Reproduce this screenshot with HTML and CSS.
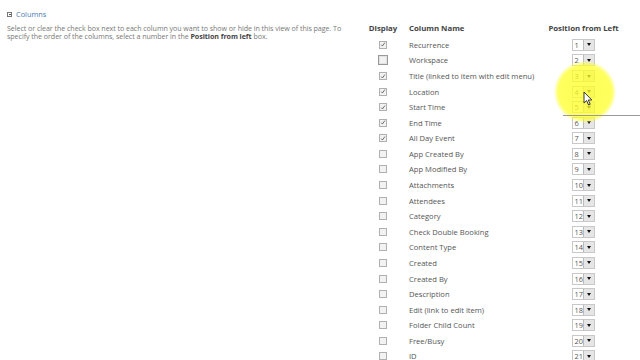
FILE: index.html
```html
<!DOCTYPE html>
<html>
<head>
<meta charset="utf-8">
<link rel="stylesheet" href="styles.css">
</head>
<body>
<div class="page">
  <section class="intro">
    <div class="title"><span class="collapse"></span>Columns</div>
    <p class="desc">Select or clear the check box next to each column you want to show or hide in this view of this page. To specify the order of the columns, select a number in the <b>Position from left</b> box.</p>
  </section>
  <section class="cols">
    <div class="grid" id="grid">
      <div class="h h-display">Display</div>
      <div class="h h-name">Column Name</div>
      <div class="h h-pos">Position from Left</div>
    </div>
  </section>
</div>
<div class="highlight"></div>
<div class="rule"></div>
<svg class="cursor" width="10" height="15" viewBox="0 0 10 15"><path d="M1 1 L1 12 L3.6 9.6 L5.6 14 L7.2 13.3 L5.3 9 L8.8 9 Z" fill="#fff" stroke="#222" stroke-width="0.9" stroke-linejoin="round"/></svg>
<script src="app.js"></script>
</body>
</html>
```
FILE: app.js
```js
var rows = [
  ["Recurrence", 1],["Workspace", 0],["Title (linked to item with edit menu)", 1],["Location", 1],["Start Time", 1],["End Time", 1],["All Day Event", 1],["App Created By", 0],["App Modified By", 0],["Attachments", 0],["Attendees", 0],["Category", 0],["Check Double Booking", 0],["Content Type", 0],["Created", 0],["Created By", 0],["Description", 0],["Edit (link to edit item)", 0],["Folder Child Count", 0],["Free/Busy", 0],["ID", 0]
];
var g = document.getElementById('grid');
rows.forEach(function (r, i) {
  var c = document.createElement('div'); c.className = 'cell c-box';
  var b = document.createElement('span'); b.className = 'cb' + (i === 1 ? ' focus' : '');
  if (r[1]) b.innerHTML = '<svg viewBox="0 0 8 8" width="8" height="8"><path d="M1.6 4.2 L3.2 6 L6.6 1.4" fill="none" stroke="#555" stroke-width="1.1"/></svg>';
  c.appendChild(b); g.appendChild(c);
  var n = document.createElement('div'); n.className = 'cell c-name'; n.textContent = r[0]; g.appendChild(n);
  var p = document.createElement('div'); p.className = 'cell c-pos';
  p.innerHTML = '<span class="sel"><span class="num">' + (i + 1) + '</span><span class="btn"><i></i></span></span>';
  g.appendChild(p);
});
```
FILE: styles.css
```css
html, body { margin: 0; padding: 0; background: #fff; }
body { width: 640px; height: 360px; overflow: hidden; position: relative; font-family: "Open Sans", "Noto Sans", sans-serif; }
.page { display: flex; }
.intro { width: 342px; flex: none; padding: 9px 0 0 7px; box-sizing: border-box; }
.title { display: flex; align-items: center; font-size: 7.4px; color: #4a7bb6; height: 10px; }
.collapse { width: 5px; height: 5px; border: 1px solid #777; margin-right: 4px; position: relative; box-sizing: border-box; }
.collapse::after { content: ""; position: absolute; left: 0.5px; right: 0.5px; top: 1.5px; height: 1px; background: #555; }
.desc { margin: 5px 0 0; font-size: 7.1px; line-height: 8px; color: #777; letter-spacing: -0.05px; }
.desc b { color: #444; }
.cols { padding: 21.5px 0 0 24px; }
.grid { display: grid; grid-template-columns: 34px 148px 71px; grid-auto-rows: 15.58px; }
.h { font-size: 7.8px; font-weight: bold; color: #444; display: flex; align-items: center; height: 13px; }
.h-display { justify-content: center; }
.h-name { padding-left: 9px; }
.h-pos { justify-content: center; }
.cell { display: flex; align-items: center; }
.c-box { justify-content: center; }
.cb { width: 8px; height: 8px; border: 1px solid #b0b0b0; box-sizing: border-box; background: #f2f2f2; display: flex; align-items: center; justify-content: center; }
.cb svg { width: 7px; height: 7px; }
.cb.focus { width: 10px; height: 10px; border-color: #999; box-shadow: inset 0 0 0 1px #e2e2e2; }
.c-name { padding-left: 9px; font-size: 7.6px; color: #555; white-space: nowrap; }
.c-pos { justify-content: center; padding-right: 1px; }
.sel { display: flex; width: 23px; height: 12px; border: 1px solid #c8c8c8; box-sizing: border-box; background: #fff; }
.num { flex: 1; font-size: 7.4px; color: #555; padding-left: 2px; line-height: 10px; }
.btn { width: 10px; background: #e6e6e6; border-left: 1px solid #bbb; display: flex; align-items: center; justify-content: center; }
.btn i { width: 0; height: 0; border-left: 2.5px solid transparent; border-right: 2.5px solid transparent; border-top: 3px solid #111; }
.highlight { position: absolute; left: 554px; top: 61px; width: 62px; height: 62px; border-radius: 50%; background: radial-gradient(circle, rgba(255,255,40,0.78) 0%, rgba(255,255,40,0.75) 60%, rgba(255,255,80,0.35) 68%, rgba(255,255,120,0) 71%); }
.rule { position: absolute; left: 563px; top: 115px; width: 77px; height: 1px; background: #999; }
.cursor { position: absolute; left: 583px; top: 91px; }
```
